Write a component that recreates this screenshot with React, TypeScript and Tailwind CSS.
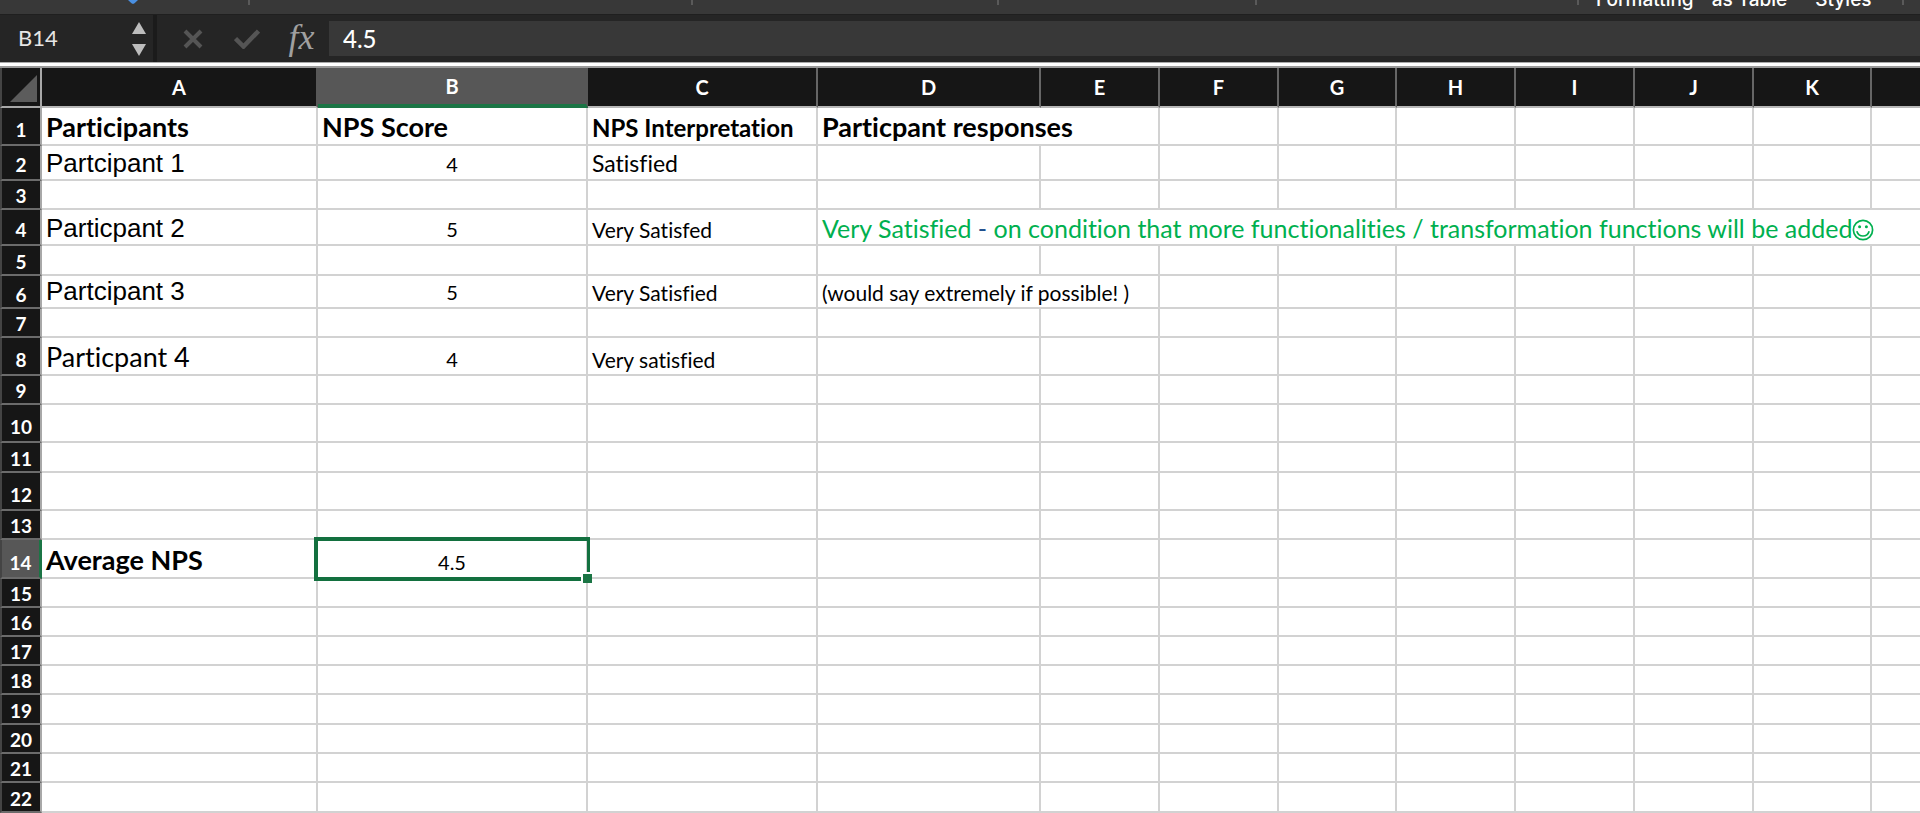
import type { ReactNode } from "react";

type Cell = { text: ReactNode; className?: string; span?: number; selected?: boolean };
type Row = { height: string; tall?: boolean; cells?: Record<string, Cell> };

const columns = ["A", "B", "C", "D", "E", "F", "G", "H", "I", "J", "K", ""];

const colWidths = [
  "w-[276px]", "w-[270px]", "w-[230px]", "w-[223px]", "w-[119px]", "w-[119px]",
  "w-[118px]", "w-[119px]", "w-[119px]", "w-[119px]", "w-[118px]", "",
];

const title = "pl-1 pb-[3px] text-[27px] font-bold";
const arial = "pl-1 pb-[2px] font-['Liberation_Sans',sans-serif] text-[26px]";
const small = "pl-1 text-[21px]";
const score = "pb-px text-[20px] text-center";

const rows: Row[] = [
  {
    height: "h-[38px]",
    tall: true,
    cells: {
      A: { text: "Participants", className: title },
      B: { text: "NPS Score", className: title },
      C: { text: "NPS Interpretation", className: "pl-1 pb-[2px] text-[24px] font-bold" },
      D: { text: "Particpant responses", className: title, span: 2 },
    },
  },
  {
    height: "h-[35px]",
    tall: true,
    cells: {
      A: { text: "Partcipant 1", className: arial },
      B: { text: "4", className: score },
      C: { text: "Satisfied", className: "pl-1 pb-[2px] text-[23px]" },
    },
  },
  { height: "h-[29px]" },
  {
    height: "h-[36px]",
    tall: true,
    cells: {
      A: { text: "Particpant 2", className: arial },
      B: { text: "5", className: score },
      C: { text: "Very Satisfed", className: small },
      D: {
        text: (
          <>
            Very Satisfied <span className="text-[#1f4e8c]">-</span> on condition that more
            functionalities / transformation functions will be added
            <Smiley />
          </>
        ),
        className: "pl-1 pb-[2px] text-[25px] text-[#00b04f]",
        span: 9,
      },
    },
  },
  { height: "h-[30px]" },
  {
    height: "h-[33px]",
    cells: {
      A: { text: "Partcipant 3", className: arial },
      B: { text: "5", className: score },
      C: { text: "Very Satisfied", className: small },
      D: { text: "(would say extremely if possible! )", className: small, span: 2 },
    },
  },
  { height: "h-[29px]" },
  {
    height: "h-[38px]",
    tall: true,
    cells: {
      A: { text: "Particpant 4", className: "pl-1 pb-[3px] text-[27px]" },
      B: { text: "4", className: score },
      C: { text: "Very satisfied", className: small },
    },
  },
  { height: "h-[29px]" },
  { height: "h-[38px]", tall: true },
  { height: "h-[30px]" },
  { height: "h-[38px]", tall: true },
  { height: "h-[29px]" },
  {
    height: "h-[39px]",
    tall: true,
    cells: {
      A: { text: "Average NPS", className: title },
      B: { text: "4.5", className: score, selected: true },
    },
  },
  { height: "h-[29px]" },
  { height: "h-[29px]" },
  { height: "h-[29px]" },
  { height: "h-[29px]" },
  { height: "h-[30px]" },
  { height: "h-[29px]" },
  { height: "h-[29px]" },
  { height: "h-[30px]" },
];

function Smiley() {
  return (
    <svg viewBox="0 0 22 22" className="inline size-[22px] align-[-3px]" fill="none" stroke="currentColor" strokeWidth="1.7" aria-hidden="true">
      <circle cx="11" cy="11" r="9.6" />
      <circle cx="7.6" cy="7.8" r="1.5" fill="currentColor" stroke="none" />
      <circle cx="14.4" cy="7.8" r="1.5" fill="currentColor" stroke="none" />
      <path d="M4.8 12.2c1 3.2 3.4 4.8 6.2 4.8s5.200-1.600 6.200-4.800" />
    </svg>
  );
}

function Separator() {
  return <div className="h-[5px] w-[2px] shrink-0 bg-[#5a5a5a]" />;
}

function Ribbon() {
  return (
    <div className="flex h-[14px] overflow-hidden bg-[#383838] text-[19px] leading-5 text-white">
      <div className="flex w-[248px] shrink-0 justify-center pl-[18px]">
        <svg viewBox="0 0 12 4" className="h-1 w-3" aria-hidden="true">
          <path d="M1 0h10L7.500 3.300q-1.500 1-3 0z" fill="#4a90e2" />
        </svg>
      </div>
      <Separator />
      <div className="w-[441px] shrink-0" />
      <Separator />
      <div className="w-[304px] shrink-0" />
      <Separator />
      <div className="w-[256px] shrink-0" />
      <Separator />
      <div className="w-[320px] shrink-0" />
      <Separator />
      <div className="flex w-[323px] shrink-0 items-end gap-[18px] pb-[4px] pl-[17px] font-['Inter',sans-serif] font-medium whitespace-nowrap">
        <span>Formatting</span>
        <span>as Table</span>
        <span className="pl-[10px]">Styles</span>
      </div>
      <Separator />
    </div>
  );
}

function FormulaBar() {
  return (
    <div className="flex h-[48px] items-center border-t border-[#1f1f1f] bg-[#252525] text-white">
      <div className="flex h-full w-[157px] shrink-0 items-center justify-between border-r-4 border-[#1b1b1b] pr-[7px] pl-[18px]">
        <input aria-label="Name box" defaultValue="B14" className="w-[90px] bg-transparent pb-[2px] text-[22px] leading-7 text-[#e6e6e6] outline-none" />
        <div className="flex flex-col gap-[10px]">
          <button type="button" aria-label="Previous name" className="block">
            <svg viewBox="0 0 14 12" className="h-3 w-[14px]"><path d="M7 0l7 12H0z" fill="#bdbdbd" /></svg>
          </button>
          <button type="button" aria-label="Next name" className="block">
            <svg viewBox="0 0 14 12" className="h-3 w-[14px]"><path d="M7 12L0 0h14z" fill="#bdbdbd" /></svg>
          </button>
        </div>
      </div>
      <div className="flex shrink-0 items-center gap-[31px] pl-[26px]">
        <button type="button" aria-label="Cancel">
          <svg viewBox="0 0 20 20" className="size-5" stroke="#555" strokeWidth="4"><path d="M2 2l16 16M18 2L2 18" /></svg>
        </button>
        <button type="button" aria-label="Enter">
          <svg viewBox="0 0 26 20" className="h-5 w-[26px]" fill="none" stroke="#555" strokeWidth="4.500"><path d="M1.500 9.500l8 8L24.500 2" /></svg>
        </button>
      </div>
      <button type="button" aria-label="Insert function" className="w-[69px] shrink-0 pb-1 pl-[14px] font-['Liberation_Serif',serif] text-[36px] leading-8 text-[#a0a0a0] italic">
        fx
      </button>
      <input aria-label="Formula" defaultValue="4.5" className="h-[35px] min-w-0 flex-1 bg-[#383838] pl-[14px] text-[24px] font-medium outline-none" />
    </div>
  );
}

function SelectionFrame() {
  return (
    <div className="pointer-events-none absolute -top-[3px] -right-1 -bottom-1 -left-1 z-10 border-4 border-r-[3px] border-[#13703f]">
      <div className="absolute -right-[5px] -bottom-[6px] size-[11px] border-t-2 border-l-2 border-white bg-[#1b7545]" />
    </div>
  );
}

function SheetRow({ row, number }: { row: Row; number: number }) {
  const cells: ReactNode[] = [];
  let active = false;
  for (let i = 0; i < columns.length; ) {
    const cell = row.cells?.[columns[i]];
    const span = cell?.span ?? 1;
    const last = i + span === columns.length;
    if (cell?.selected) active = true;
    cells.push(
      <td
        key={i}
        colSpan={span}
        className={`relative border-b-2 border-[#d2d2d2] align-bottom leading-7 whitespace-nowrap ${last ? "" : "border-r-2"} ${cell?.className ?? ""}`}
      >
        {cell?.text}
        {cell?.selected && <SelectionFrame />}
      </td>,
    );
    i += span;
  }
  return (
    <tr className={row.height}>
      <th
        scope="row"
        className={`border-b-2 border-l-2 border-l-[#444] align-bottom text-[19px] leading-6 font-bold text-white ${
          row.tall ? "pb-[2px]" : ""
        } ${
          active
            ? "border-r-[3px] border-r-[#1b7545] border-b-[#6b6b6b] bg-[#575757]"
            : "border-r-2 border-r-[#a8a8a8] border-b-[#6b6b6b] bg-[#161616]"
        }`}
      >
        {number}
      </th>
      {cells}
    </tr>
  );
}

const headerTone: Record<string, string> = {
  A: "border-r-2 border-b-2 border-r-[#575757] border-b-[#b8b8b8] bg-[#161616]",
  B: "border-r-2 border-b-4 border-r-[#575757] border-b-[#1b7545] bg-[#575757]",
  "": "border-b-2 border-b-[#b8b8b8] bg-[#161616]",
};

export default function App() {
  return (
    <div className="min-h-screen overflow-hidden bg-white font-['Lato',sans-serif] text-black [font-variant-ligatures:none]">
      <Ribbon />
      <FormulaBar />
      <div className="h-[6px] border-t border-b-2 border-t-[#aaa] border-b-[#9a9a9a] bg-white" />
      <table className="w-full table-fixed border-separate border-spacing-0">
        <colgroup>
          <col className="w-[42px]" />
          {colWidths.map((width, i) => (
            <col key={i} className={width} />
          ))}
        </colgroup>
        <thead>
          <tr className="h-10">
            <th className="border-r-2 border-b-2 border-l-2 border-r-[#a8a8a8] border-b-[#a8a8a8] border-l-[#444] bg-[#161616] p-0 align-bottom">
              <button type="button" aria-label="Select all" className="ml-[8px] block pb-1">
                <svg viewBox="0 0 27 27" className="size-[27px]"><path d="M27 0v27H0z" fill="#5c5c5c" /></svg>
              </button>
            </th>
            {columns.map((name, i) => (
              <th
                key={i}
                scope="col"
                className={`p-0 text-[20px] leading-6 font-bold text-white ${
                  headerTone[name] ?? "border-r-2 border-b-2 border-r-[#666] border-b-[#b8b8b8] bg-[#161616]"
                }`}
              >
                {name}
              </th>
            ))}
          </tr>
        </thead>
        <tbody>
          {rows.map((row, i) => (
            <SheetRow key={i} row={row} number={i + 1} />
          ))}
        </tbody>
      </table>
    </div>
  );
}
